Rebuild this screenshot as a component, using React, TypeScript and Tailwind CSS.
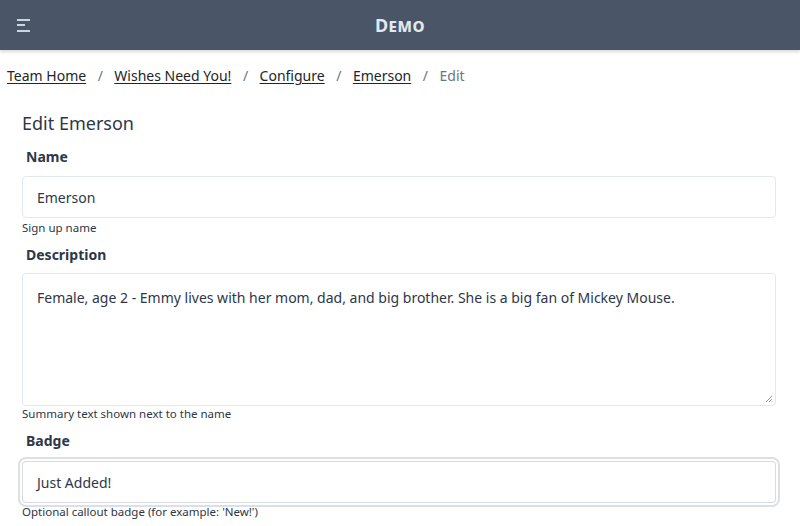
import React from "react";

export default function App() {
  return (
    <div className="min-h-[526px] bg-white text-[#2d3748]" style={{ fontFamily: '"Noto Sans", "Open Sans", sans-serif' }}>
      <header className="relative flex h-[50px] items-center bg-[#4a5568] shadow-[0_2px_3px_rgba(0,0,0,0.15)]">
        <button className="ml-[17px] flex h-[13px] w-[13px] flex-col justify-between">
          <span className="block h-[2px] w-[13px] bg-[#cbd5e0]" />
          <span className="block h-[2px] w-[8px] bg-[#cbd5e0]" />
          <span className="block h-[2px] w-[13px] bg-[#cbd5e0]" />
        </button>
        <div className="pointer-events-none absolute left-0 right-0 top-0 flex h-[50px] items-center justify-center">
          <span className="text-[18px] font-bold tracking-[0.5px] text-[#e2e8f0] [font-variant:small-caps]">Demo</span>
        </div>
      </header>

      <nav className="flex items-center px-[7px] pt-[14px] text-[14px] leading-[24px] text-[#212529]">
        <a className="underline underline-offset-2">Team Home</a>
        <span className="mx-[11.5px] text-[#6c757d]">/</span>
        <a className="underline underline-offset-2">Wishes Need You!</a>
        <span className="mx-[11.5px] text-[#6c757d]">/</span>
        <a className="underline underline-offset-2">Configure</a>
        <span className="mx-[11.5px] text-[#6c757d]">/</span>
        <a className="underline underline-offset-2">Emerson</a>
        <span className="mx-[11.5px] text-[#6c757d]">/</span>
        <span className="text-[#6c757d]">Edit</span>
      </nav>

      <main className="pl-[22px] pr-[24px]">
        <h1 className="mt-[22px] text-[18px] leading-[26px] text-[#2d3748]">Edit Emerson</h1>

        <label className="mt-[10px] block pl-[4px] text-[14px] font-bold leading-[22px]">Name</label>
        <div className="mt-[8px] flex h-[42px] items-center rounded-[4px] border border-[#e2e8f0] px-[14px] text-[14px]">
          Emerson
        </div>
        <div className="mt-[2px] text-[11.5px] leading-[16px] text-[#2d3748]">Sign up name</div>

        <label className="mt-[8px] block pl-[4px] text-[14px] font-bold leading-[22px]">Description</label>
        <div className="relative mt-[7px] h-[133px] rounded-[4px] border border-[#e2e8f0] px-[14px] pt-[12px] text-[14px] leading-[24px]">
          Female, age 2 - Emmy lives with her mom, dad, and big brother. She is a big fan of Mickey Mouse.
          <svg className="absolute bottom-[2px] right-[2px]" width="8" height="8" viewBox="0 0 8 8">
            <path d="M7 1 L1 7 M7 4 L4 7 M7 6.5 L6.5 7" stroke="#999" strokeWidth="1" />
          </svg>
        </div>
        <div className="mt-0 text-[11.5px] leading-[16px] text-[#2d3748]">Summary text shown next to the name</div>

        <label className="mt-[8px] block pl-[4px] text-[14px] font-bold leading-[22px]">Badge</label>
        <div className="mt-[9px] flex h-[42px] items-center rounded-[4px] border border-[#d7dadf] px-[14px] text-[14px] ring-2 ring-[#dcdfe3] ring-offset-2">
          Just Added!
        </div>
        <div className="mt-[1px] text-[11.5px] leading-[16px] text-[#2d3748]">Optional callout badge (for example: 'New!')</div>
      </main>
    </div>
  );
}
